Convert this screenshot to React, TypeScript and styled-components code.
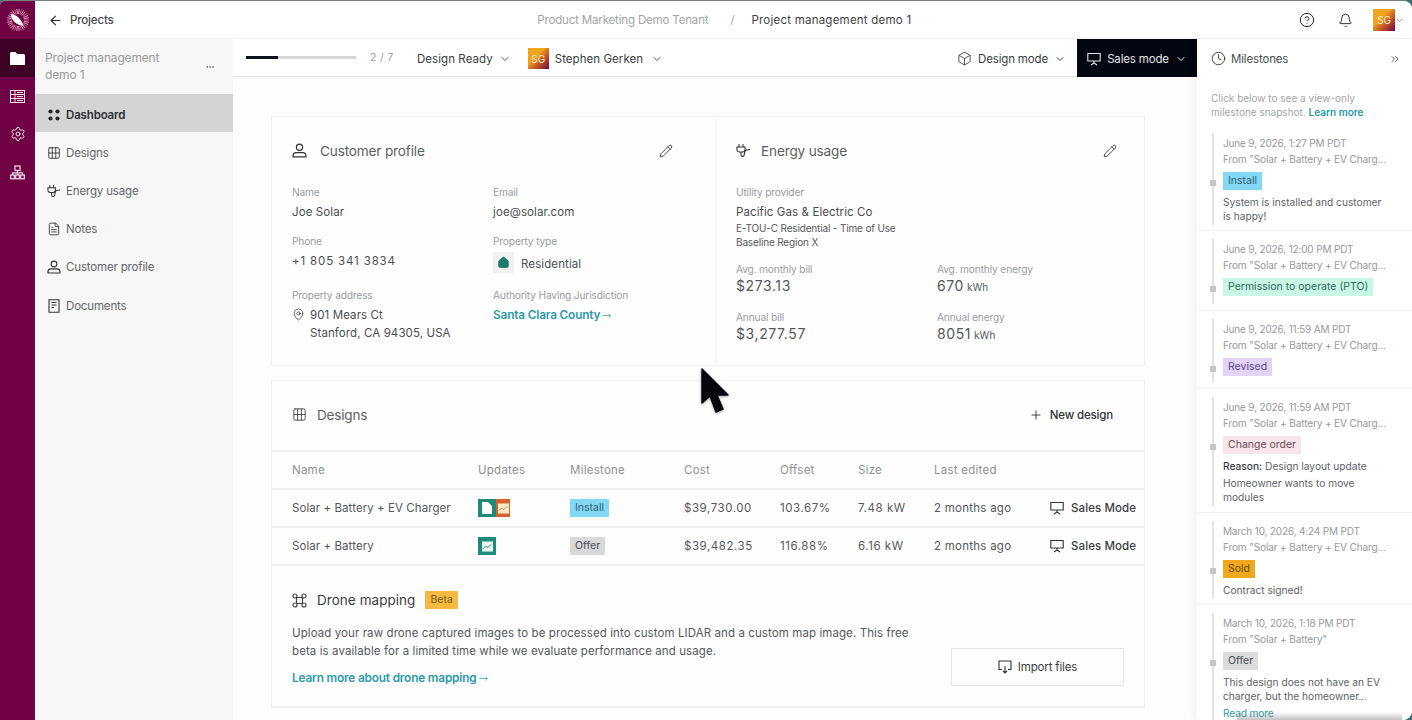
import React from 'react'
import styled, { createGlobalStyle } from 'styled-components'
import {
  ArrowLeft, Bell, Box, ChevronDown, ChevronsRight, CircleHelp, Clock, Ellipsis, FileText,
  Grid3x2, Pencil, Plus, Settings, MapPin, MoveRight, House,
} from 'lucide-react'

const GlobalStyle = createGlobalStyle`
  html, body { margin: 0; padding: 0; background: #3f6f78; }
  * { box-sizing: border-box; }
  body { font-family: Inter, "Liberation Sans", sans-serif; color: #3c3f44; letter-spacing: -0.01em; }
`

const Page = styled.div`
  position: relative;
  width: 1412px;
  height: 720px;
  display: flex;
  overflow: hidden;
  background: #fdfdfd;
  border-top: 1px solid #7b7f80;
  border-radius: 5px 9px 9px 0;
`

const Rail = styled.nav`
  width: 35px;
  flex: none;
  background: #6f0344;
  display: flex;
  flex-direction: column;
  align-items: center;
`

const RailLogo = styled.div`
  height: 38px;
  display: flex;
  align-items: center;
  justify-content: center;
`

const RailItem = styled.div<{ $active?: boolean }>`
  width: 35px;
  height: 38px;
  display: flex;
  align-items: center;
  justify-content: center;
  color: #f3dfe9;
  background: ${p => (p.$active ? '#3d0226' : 'transparent')};
`

const Shell = styled.div`
  flex: 1;
  min-width: 0;
  display: flex;
  flex-direction: column;
`

const TopBar = styled.header`
  height: 38px;
  flex: none;
  background: #fff;
  display: flex;
  align-items: center;
  padding: 1px 8px 0 13px;
  border-bottom: 1px solid #f1f1f1;
`

const BackLink = styled.div`
  display: flex;
  align-items: center;
  gap: 7px;
  font-size: 11.5px;
  font-weight: 500;
  color: #44474b;
  svg { color: #24272b; }
`

const Crumbs = styled.div`
  flex: 1;
  display: flex;
  justify-content: center;
  align-items: center;
  gap: 20px;
  font-size: 11.5px;
  color: #a3a5a8;
  padding-left: 47px;
  span { margin-left: 2px; }
  b { font-weight: 400; color: #3f4246; letter-spacing: 0.02em; margin-left: -3px; }
`

const TopActions = styled.div`
  display: flex;
  align-items: center;
  color: #24272b;
`

const IconSlot = styled.span`
  width: 38px;
  display: flex;
  justify-content: center;
`

const Avatar = styled.span<{ $size: number; $gap?: number }>`
  width: ${p => p.$size}px;
  height: ${p => p.$size}px;
  flex: none;
  margin-left: ${p => p.$gap ?? 0}px;
  display: flex;
  align-items: center;
  justify-content: center;
  color: #fbeecf;
  font-size: 10px;
  background: linear-gradient(135deg, #f1a51c 38%, #c65a26 62%, #6d0744 100%);
`

const Body = styled.div`
  flex: 1;
  min-height: 0;
  display: flex;
`

const SideNav = styled.aside`
  width: 198px;
  flex: none;
  background: #f7f7f7;
`

const ProjectTitle = styled.div`
  height: 55px;
  padding: 1px 18px 0 10px;
  display: flex;
  align-items: center;
  justify-content: space-between;
  font-size: 12px;
  line-height: 17px;
  color: #98999c;
  div { width: 130px; margin-top: -2px; }
`

const NavItem = styled.div<{ $active?: boolean }>`
  height: 38.2px;
  display: flex;
  align-items: center;
  gap: 5px;
  padding: 3px 0 0 12px;
  font-size: 11.5px;
  font-weight: ${p => (p.$active ? 600 : 400)};
  color: ${p => (p.$active ? '#2c2f33' : '#63666a')};
  background: ${p => (p.$active ? '#d4d4d4' : 'transparent')};
  svg { color: #2f3236; flex: none; }
`

const Center = styled.main`
  flex: 1;
  min-width: 0;
  display: flex;
  flex-direction: column;
`

const ToolBar = styled.div`
  height: 38px;
  flex: none;
  display: flex;
  align-items: stretch;
  background: #fff;
  border-bottom: 1px solid #e2e2e2;
  padding-left: 13px;
`

const Progress = styled.div`
  display: flex;
  align-items: center;
  gap: 14px;
  font-size: 10.5px;
  color: #9a9c9f;
  width: 171px;
  letter-spacing: 0.03em;
`

const Track = styled.div`
  width: 110px;
  height: 3px;
  background: #d6d6d6;
  div { height: 3px; background: #0d1018; width: 32px; }
`

const ToolPick = styled.div<{ $chevronGap?: number }>`
  display: flex;
  align-items: center;
  gap: 6px;
  padding-top: 2px;
  font-size: 11.5px;
  color: #3a3d41;
  margin-right: 17px;
  letter-spacing: 0.005em;
  svg { color: #55585c; margin-left: ${p => p.$chevronGap ?? 0}px; }
`

const Spacer = styled.div`
  flex: 1;
`

const ModePick = styled.div<{ $dark?: boolean }>`
  width: ${p => (p.$dark ? 120 : 131)}px;
  display: flex;
  align-items: center;
  justify-content: center;
  gap: 6px;
  padding-top: 1px;
  font-size: 11.5px;
  color: ${p => (p.$dark ? '#e4e5e6' : '#3a3d41')};
  background: ${p => (p.$dark ? '#030712' : 'transparent')};
  margin-bottom: -1px;
`

const Scroll = styled.div`
  flex: 1;
  min-height: 0;
  overflow: hidden;
  padding: 39px 52px 0 38px;
  background: #fdfdfd;
`

const TopCards = styled.div`
  display: grid;
  grid-template-columns: 445px 429px;
  height: 250px;
  margin-bottom: 14px;
`

const Card = styled.section`
  border: 1px solid #f1f1f1;
  background: #fefefe;
  padding: 0 20px;
  & + & { border-left: none; }
`

const CardHead = styled.div`
  height: 69px;
  padding-bottom: 2px;
  display: flex;
  align-items: center;
  gap: 13px;
  font-size: 13.6px;
  color: #5c5f63;
  svg { color: #2f3236; flex: none; }
  span { flex: 1; }
`

const FieldGrid = styled.div<{ $top?: number }>`
  display: grid;
  grid-template-columns: 201px 1fr;
  margin-top: ${p => p.$top ?? 0}px;
`

const Field = styled.div<{ $h: number }>`
  height: ${p => p.$h}px;
`

const Label = styled.div`
  font-size: 10.2px;
  line-height: 13px;
  color: #9a9c9f;
  margin-bottom: 4px;
`

const Value = styled.div<{ $wide?: boolean }>`
  font-size: 11.5px;
  line-height: 18px;
  color: #4a4d51;
  letter-spacing: ${p => (p.$wide ? '0.85px' : '0.1px')};
`

const Small = styled.div`
  font-size: 10px;
  line-height: 14px;
  color: #55585c;
`

const Big = styled.div`
  font-size: 14px;
  line-height: 18px;
  color: #55585c;
  letter-spacing: 0.6px;
  margin-top: -3px;
  small { font-size: 10px; margin-left: 3px; letter-spacing: 0; }
`

const Address = styled.div`
  display: flex;
  gap: 5px;
  svg { margin-top: 2px; color: #2f3236; flex: none; }
`

const TypeRow = styled.div`
  display: flex;
  align-items: center;
  gap: 7px;
  margin-top: 1px;
  > div { margin-top: 3px; }
`

const HouseBox = styled.span`
  width: 21px;
  height: 21px;
  background: #f1f1f1;
  display: flex;
  align-items: center;
  justify-content: center;
  color: #1d7a6c;
`

const Link = styled.div`
  display: flex;
  align-items: center;
  gap: 2px;
  font-size: 11.8px;
  line-height: 18px;
  font-weight: 600;
  color: #2d9aa8;
`

const DesignsCard = styled.section`
  border: 1px solid #f1f1f1;
  background: #fefefe;
`

const DesignsHead = styled.div`
  height: 69px;
  display: flex;
  align-items: center;
  gap: 10px;
  padding: 0 31px 2px 20px;
  font-size: 13.5px;
  color: #5c5f63;
  svg { color: #2f3236; }
  span { flex: 1; }
`

const NewDesign = styled.div`
  display: flex;
  align-items: center;
  gap: 7px;
  font-size: 11.5px;
  font-weight: 500;
  color: #2f3236;
`

const TableRow = styled.div<{ $head?: boolean }>`
  height: 38px;
  display: grid;
  grid-template-columns: 186px 92px 114px 96px 78px 76px 1fr 94px;
  align-items: center;
  padding-left: 20px;
  border-top: 2px solid #f0f0f0;
  font-size: 11.5px;
  letter-spacing: 0.25px;
  color: ${p => (p.$head ? '#8f9194' : '#55585c')};
`

const NameCell = styled.div`
  letter-spacing: 0.07px;
`

const Numeric = styled.div`
  letter-spacing: 0.55px;
`

const UpdateIcons = styled.div`
  display: flex;
  height: 18px;
`

const UpdateIcon = styled.span<{ $bg: string; $w?: number }>`
  width: ${p => p.$w ?? 18}px;
  height: 18px;
  background: ${p => p.$bg};
  display: flex;
  align-items: center;
  justify-content: center;
`

const Tag = styled.span<{ $bg: string; $fg: string }>`
  display: block;
  width: fit-content;
  height: 18px;
  line-height: 18px;
  padding: 0 5px;
  font-size: 10.5px;
  background: ${p => p.$bg};
  color: ${p => p.$fg};
  white-space: nowrap;
  letter-spacing: 0;
`

const SalesLink = styled.div`
  display: flex;
  align-items: center;
  gap: 7px;
  font-weight: 500;
  color: #3a3d41;
  white-space: nowrap;
  letter-spacing: 0.1px;
  svg { color: #2f3236; }
`

const Drone = styled.div`
  border-top: 2px solid #f0f0f0;
  border-bottom: 1px solid #f0f0f0;
  height: 143px;
  padding: 24px 20px 0;
  display: flex;
  align-items: flex-end;
  justify-content: space-between;
`

const DroneText = styled.div`
  align-self: flex-start;
  width: 622px;
`

const DroneTitle = styled.div`
  display: flex;
  align-items: center;
  gap: 10px;
  font-size: 13.5px;
  letter-spacing: 0.05px;
  color: #3a3d41;
  height: 20px;
  margin-bottom: 14px;
`

const DroneCopy = styled.p`
  margin: 0 0 9px;
  font-size: 11.5px;
  line-height: 18px;
  letter-spacing: 0.09px;
  color: #55585c;
`

const ImportButton = styled.div`
  width: 173px;
  height: 38px;
  margin-bottom: 20px;
  border: 1px solid #e6e6e6;
  display: flex;
  align-items: center;
  justify-content: center;
  gap: 6px;
  font-size: 11.5px;
  color: #3a3d41;
`

const Panel = styled.aside`
  width: 215px;
  flex: none;
  background: #fff;
  box-shadow: -5px 0 7px rgba(0, 0, 0, 0.04);
  position: relative;
  overflow: hidden;
  &::after {
    content: '';
    position: absolute;
    left: 40px;
    right: 10px;
    bottom: 0;
    height: 8px;
    background: linear-gradient(to bottom, rgba(120, 120, 120, 0), rgba(120, 120, 120, 0.45));
  }
`

const PanelHead = styled.div`
  height: 38px;
  display: flex;
  align-items: center;
  gap: 5px;
  padding: 1px 11px 0 14px;
  font-size: 11.5px;
  color: #4a4d51;
  svg { color: #2f3236; }
  span { flex: 1; }
`

const PanelIntro = styled.div`
  padding: 14px 14px 0;
  height: 56px;
  font-size: 10px;
  line-height: 14px;
  letter-spacing: 0;
  color: #a3a5a8;
  b { font-weight: 600; color: #2d9aa8; }
`

const Timeline = styled.div`
  display: flex;
  flex-direction: column;
`

const Item = styled.div<{ $h: number }>`
  height: ${p => p.$h}px;
  flex: none;
  padding: 7.5px 0 6px 15px;
  border-bottom: 1px solid #f3f3f3;
  display: flex;
  &:first-child { padding-top: 0; padding-bottom: 5px; }
`

const ItemBody = styled.div`
  flex: 1;
  min-width: 0;
  position: relative;
  border-left: 2px solid #e2e2e2;
  padding: 2px 26px 0 9px;
`

const Marker = styled.i`
  position: absolute;
  left: -4px;
  top: 47px;
  width: 6px;
  height: 6px;
  background: #c5c5c5;
`

const Stamp = styled.div`
  font-size: 10px;
  line-height: 16px;
  color: #97999c;
  white-space: nowrap;
`

const From = styled.div`
  font-size: 10.1px;
  line-height: 16px;
  color: #97999c;
  white-space: nowrap;
  margin-bottom: 5px;
`

const Note = styled.div<{ $gap?: number }>`
  font-size: 10.2px;
  line-height: 14px;
  letter-spacing: 0;
  color: #606367;
  margin-top: ${p => p.$gap ?? 5}px;
  b { font-weight: 500; color: #3a3d41; }
`

const ReadMore = styled.div`
  font-size: 10.2px;
  line-height: 16px;
  margin-top: 2px;
  color: #2d9aa8;
`

const Cursor = styled.svg`
  position: absolute;
  left: 699px;
  top: 365px;
  filter: drop-shadow(0 1px 1.5px rgba(0, 0, 0, 0.35));
`

const Logo = () => (
  <svg width="24" height="24" viewBox="0 0 24 24">
    {Array.from({ length: 30 }).map((_, i) => {
      const a = (i / 30) * Math.PI * 2
      return (
        <line key={i} x1={12 + Math.cos(a) * 6} y1={12 + Math.sin(a) * 6} x2={12 + Math.cos(a) * 11} y2={12 + Math.sin(a) * 11}
          stroke={i % 3 === 0 ? '#e2628f' : '#f2b8d0'} strokeWidth="0.9" />
      )
    })}
    <path d="M5 6 C10 6 15 11 17.500 17.500 C11 18 5 12 5 6Z" fill="#fff" />
  </svg>
)

const FolderFill = () => (
  <svg width="15" height="13" viewBox="0 0 15 13"><path d="M0 1.500C0 .7.7 0 1.500 0h4l1.500 2h6.500c.8 0 1.500.7 1.500 1.500V12c0 .6-.4 1-1 1H1c-.6 0-1-.4-1-1Z" fill="#fff" /></svg>
)

const ListPanel = () => (
  <svg width="15" height="13" viewBox="0 0 15 13" fill="none" stroke="currentColor" strokeWidth="1"><rect x=".5" y=".5" width="14" height="12" /><path d="M.5 4.500h14M.5 8.500h14M5 .5v12M7 2.500h6M7 6.500h6M7 10.500h6" /></svg>
)

const OrgChart = () => (
  <svg width="15" height="15" viewBox="0 0 15 15" fill="none" stroke="currentColor" strokeWidth="1.200">
    <rect x="5" y="1" width="5" height="4.500" />
    <rect x=".7" y="10" width="3.600" height="3.800" />
    <rect x="5.700" y="10" width="3.600" height="3.800" />
    <rect x="10.700" y="10" width="3.600" height="3.800" />
    <path d="M7.500 5.500V10M2.500 10V7.800h10V10" />
  </svg>
)

const DashDots = () => (
  <svg width="14" height="14" viewBox="0 0 14 14" fill="#24272b"><circle cx="3.500" cy="3.500" r="2.100" /><circle cx="10.500" cy="3.500" r="2.100" /><circle cx="3.500" cy="10.500" r="2.100" /><circle cx="10.500" cy="10.500" r="2.100" /></svg>
)

const PlugIcon = ({ size = 15 }: { size?: number }) => (
  <svg width={size} height={size} viewBox="0 0 15 15" fill="none" stroke="currentColor" strokeWidth="1.100">
    <path d="M3 1v3M7 1v3M1 4h8v2.500a2.500 2.500 0 0 1-2.500 2.500h-3A2.500 2.500 0 0 1 1 6.500ZM5 9v3c0 1.500 2.500 2 3 .5l1-4c.4-1.500 2-2 5-2" />
  </svg>
)

const PersonIcon = ({ size = 14 }: { size?: number }) => (
  <svg width={size} height={size} viewBox="0 0 14 14" fill="none" stroke="currentColor" strokeWidth="1.100">
    <circle cx="7" cy="4" r="2.900" />
    <path d="M1 13v-1.200C1 10 2.400 8.900 4 8.900h6c1.600 0 3 1.100 3 2.900V13Z" />
  </svg>
)

const DocsIcon = () => (
  <svg width="14" height="14" viewBox="0 0 14 14" fill="none" stroke="currentColor" strokeWidth="1.100">
    <path d="M2 .8h10v12.400H2ZM4.500 3.500h5M4.500 6h5M4.500 8.500h2.500" />
  </svg>
)

const Screen = ({ size = 14 }: { size?: number }) => (
  <svg width={size} height={size} viewBox="0 0 14 14" fill="none" stroke="currentColor" strokeWidth="1.100">
    <path d="M.8 1.500h12.400v7.500H.8ZM7 9v2.200M7 11l-3 2M7 11l3 2" />
  </svg>
)

const DroneIcon = () => (
  <svg width="15" height="15" viewBox="0 0 15 15" fill="none" stroke="#44474b" strokeWidth="1.200">
    <circle cx="3" cy="3" r="2" /><circle cx="12" cy="3" r="2" /><circle cx="3" cy="12" r="2" /><circle cx="12" cy="12" r="2" />
    <path d="M4.500 4.500h6v6h-6Z" />
  </svg>
)

const ImportIcon = () => (
  <svg width="14" height="14" viewBox="0 0 14 14" fill="none" stroke="#2f3236" strokeWidth="1.100">
    <path d="M4 9.500H1V1h12v8.500h-3M7 6v7M5 11l2 2 2-2" />
  </svg>
)

const DocBadge = () => (
  <svg width="10" height="12" viewBox="0 0 10 12"><path d="M0 0h6l4 4v8H0Z" fill="#fff" /></svg>
)

const ChartBadge = ({ stroke, fill }: { stroke: string; fill: string }) => (
  <svg width="11" height="11" viewBox="0 0 12 11"><rect width="12" height="11" fill={fill} /><path d="M1 8l3-3 2 2 4-4" fill="none" stroke={stroke} strokeWidth="1" /></svg>
)

const rows = [
  { name: 'Solar + Battery + EV Charger', tag: 'Install', bg: '#82d8f5', fg: '#2f5f70', cost: '$39,730.00', off: '103.67%', size: '7.48 kW', two: true },
  { name: 'Solar + Battery', tag: 'Offer', bg: '#d8d8d8', fg: '#4a4d51', cost: '$39,482.35', off: '116.88%', size: '6.16 kW', two: false },
]

const FROM_EV = 'From "Solar + Battery + EV Charg...'

const App = () => (
  <Page>
    <GlobalStyle />
    <Rail>
      <RailLogo><Logo /></RailLogo>
      <RailItem $active><FolderFill /></RailItem>
      <RailItem><ListPanel /></RailItem>
      <RailItem><Settings size={16} strokeWidth={1.5} /></RailItem>
      <RailItem><OrgChart /></RailItem>
    </Rail>
    <Shell>
      <TopBar>
        <BackLink><ArrowLeft size={15} strokeWidth={1.7} />Projects</BackLink>
        <Crumbs>Product Marketing Demo Tenant<span>/</span><b>Project management demo 1</b></Crumbs>
        <TopActions>
          <IconSlot><CircleHelp size={16} strokeWidth={1.5} /></IconSlot>
          <IconSlot><Bell size={15} strokeWidth={1.5} /></IconSlot>
          <Avatar $size={22} $gap={9}>SG</Avatar>
          <ChevronDown size={9} color="#777" />
        </TopActions>
      </TopBar>
      <Body>
        <SideNav>
          <ProjectTitle><div>Project management demo 1</div><Ellipsis size={10} color="#66696d" /></ProjectTitle>
          <NavItem $active><DashDots />Dashboard</NavItem>
          <NavItem><Grid3x2 size={14} strokeWidth={1.5} />Designs</NavItem>
          <NavItem><PlugIcon size={14} />Energy usage</NavItem>
          <NavItem><FileText size={14} strokeWidth={1.5} />Notes</NavItem>
          <NavItem><PersonIcon />Customer profile</NavItem>
          <NavItem><DocsIcon />Documents</NavItem>
        </SideNav>
        <Center>
          <ToolBar>
            <Progress><Track><div /></Track>2 / 7</Progress>
            <ToolPick>Design Ready<ChevronDown size={12} /></ToolPick>
            <ToolPick $chevronGap={2}><Avatar $size={21}>SG</Avatar>Stephen Gerken<ChevronDown size={12} /></ToolPick>
            <Spacer />
            <ModePick><Box size={15} strokeWidth={1.4} />Design mode<ChevronDown size={12} /></ModePick>
            <ModePick $dark><Screen />Sales mode<ChevronDown size={12} /></ModePick>
          </ToolBar>
          <Scroll>
            <TopCards>
              <Card>
                <CardHead><PersonIcon size={15} /><span>Customer profile</span><Pencil size={14} strokeWidth={1.5} style={{ marginRight: 22 }} /></CardHead>
                <FieldGrid>
                  <Field $h={49}><Label>Name</Label><Value>Joe Solar</Value></Field>
                  <Field $h={49}><Label>Email</Label><Value>joe@solar.com</Value></Field>
                  <Field $h={54}><Label>Phone</Label><Value $wide>+1 805 341 3834</Value></Field>
                  <Field $h={54}>
                    <Label>Property type</Label>
                    <TypeRow><HouseBox><House size={13} fill="#1d7a6c" strokeWidth={1.2} /></HouseBox><Value>Residential</Value></TypeRow>
                  </Field>
                  <Field $h={60}>
                    <Label>Property address</Label>
                    <Address><MapPin size={13} strokeWidth={1.4} /><Value>901 Mears Ct<br />Stanford, CA 94305, USA</Value></Address>
                  </Field>
                  <Field $h={60}><Label>Authority Having Jurisdiction</Label><Link>Santa Clara County<MoveRight size={9} strokeWidth={2} /></Link></Field>
                </FieldGrid>
              </Card>
              <Card>
                <CardHead><PlugIcon /><span style={{ marginLeft: -3 }}>Energy usage</span><Pencil size={14} strokeWidth={1.5} style={{ marginRight: 7 }} /></CardHead>
                <Label>Utility provider</Label>
                <Value>Pacific Gas &amp; Electric Co</Value>
                <Small>E-TOU-C Residential - Time of Use</Small>
                <Small>Baseline Region X</Small>
                <FieldGrid $top={14}>
                  <Field $h={48}><Label>Avg. monthly bill</Label><Big>$273.13</Big></Field>
                  <Field $h={48}><Label>Avg. monthly energy</Label><Big>670<small>kWh</small></Big></Field>
                  <Field $h={48}><Label>Annual bill</Label><Big>$3,277.57</Big></Field>
                  <Field $h={48}><Label>Annual energy</Label><Big>8051<small>kWh</small></Big></Field>
                </FieldGrid>
              </Card>
            </TopCards>
            <DesignsCard>
              <DesignsHead><Grid3x2 size={15} strokeWidth={1.3} /><span>Designs</span><NewDesign><Plus size={14} strokeWidth={1.6} />New design</NewDesign></DesignsHead>
              <TableRow $head>
                <div>Name</div><div>Updates</div><div>Milestone</div><div>Cost</div><div>Offset</div><div>Size</div><div>Last edited</div><div />
              </TableRow>
              {rows.map(r => (
                <TableRow key={r.name}>
                  <NameCell>{r.name}</NameCell>
                  <UpdateIcons>
                    <UpdateIcon $bg="#1f8a78">{r.two ? <DocBadge /> : <ChartBadge stroke="#1f8a78" fill="#e8f6f3" />}</UpdateIcon>
                    {r.two && <UpdateIcon $bg="#d9602a" $w={14}><ChartBadge stroke="#d07a4a" fill="#f6e9c8" /></UpdateIcon>}
                  </UpdateIcons>
                  <div><Tag $bg={r.bg} $fg={r.fg}>{r.tag}</Tag></div>
                  <Numeric>{r.cost}</Numeric>
                  <Numeric>{r.off}</Numeric>
                  <Numeric>{r.size}</Numeric>
                  <div>2 months ago</div>
                  <SalesLink><Screen />Sales Mode</SalesLink>
                </TableRow>
              ))}
              <Drone>
                <DroneText>
                  <DroneTitle><DroneIcon />Drone mapping<Tag $bg="#f6b942" $fg="#7a5a1a">Beta</Tag></DroneTitle>
                  <DroneCopy>Upload your raw drone captured images to be processed into custom LIDAR and a custom map image. This free beta is available for a limited time while we evaluate performance and usage.</DroneCopy>
                  <Link>Learn more about drone mapping<MoveRight size={9} strokeWidth={2} /></Link>
                </DroneText>
                <ImportButton><ImportIcon />Import files</ImportButton>
              </Drone>
            </DesignsCard>
          </Scroll>
        </Center>
        <Panel>
          <PanelHead><Clock size={15} strokeWidth={1.4} /><span>Milestones</span><ChevronsRight size={12} color="#66696d" /></PanelHead>
          <PanelIntro>Click below to see a view-only<br />milestone snapshot. <b>Learn more</b></PanelIntro>
          <Timeline>
            <Item $h={98}>
              <ItemBody>
                <Marker />
                <Stamp>June 9, 2026, 1:27 PM PDT</Stamp>
                <From>{FROM_EV}</From>
                <Tag $bg="#82d8f5" $fg="#2f5f70">Install</Tag>
                <Note>System is installed and customer is happy!</Note>
              </ItemBody>
            </Item>
            <Item $h={80}>
              <ItemBody>
                <Marker />
                <Stamp>June 9, 2026, 12:00 PM PDT</Stamp>
                <From>{FROM_EV}</From>
                <Tag $bg="#c9f7e6" $fg="#2f6b5c">Permission to operate (PTO)</Tag>
              </ItemBody>
            </Item>
            <Item $h={78}>
              <ItemBody>
                <Marker />
                <Stamp>June 9, 2026, 11:59 AM PDT</Stamp>
                <From>{FROM_EV}</From>
                <Tag $bg="#e2d3f7" $fg="#5e4a86">Revised</Tag>
              </ItemBody>
            </Item>
            <Item $h={124}>
              <ItemBody>
                <Marker />
                <Stamp>June 9, 2026, 11:59 AM PDT</Stamp>
                <From>{FROM_EV}</From>
                <Tag $bg="#f6e6ea" $fg="#6d4a58">Change order</Tag>
                <Note><b>Reason:</b> Design layout update</Note>
                <Note $gap={3}>Homeowner wants to move modules</Note>
              </ItemBody>
            </Item>
            <Item $h={92}>
              <ItemBody>
                <Marker />
                <Stamp>March 10, 2026, 4:24 PM PDT</Stamp>
                <From>{FROM_EV}</From>
                <Tag $bg="#f0a81c" $fg="#6e4a0c">Sold</Tag>
                <Note>Contract signed!</Note>
              </ItemBody>
            </Item>
            <Item $h={130}>
              <ItemBody>
                <Marker />
                <Stamp>March 10, 2026, 1:18 PM PDT</Stamp>
                <From>From "Solar + Battery"</From>
                <Tag $bg="#dcdcdc" $fg="#4a4d51">Offer</Tag>
                <Note>This design does not have an EV charger, but the homeowner...</Note>
                <ReadMore>Read more</ReadMore>
              </ItemBody>
            </Item>
          </Timeline>
        </Panel>
      </Body>
    </Shell>
    <Cursor width="34" height="52" viewBox="0 0 34 52">
      <path d="M3 3 L3 37 L11 30 L17 46 L24 43 L18 29 L29 29 Z" fill="#05070c" stroke="#05070c" strokeWidth="1.500" strokeLinejoin="round" />
    </Cursor>
  </Page>
)

export default App
